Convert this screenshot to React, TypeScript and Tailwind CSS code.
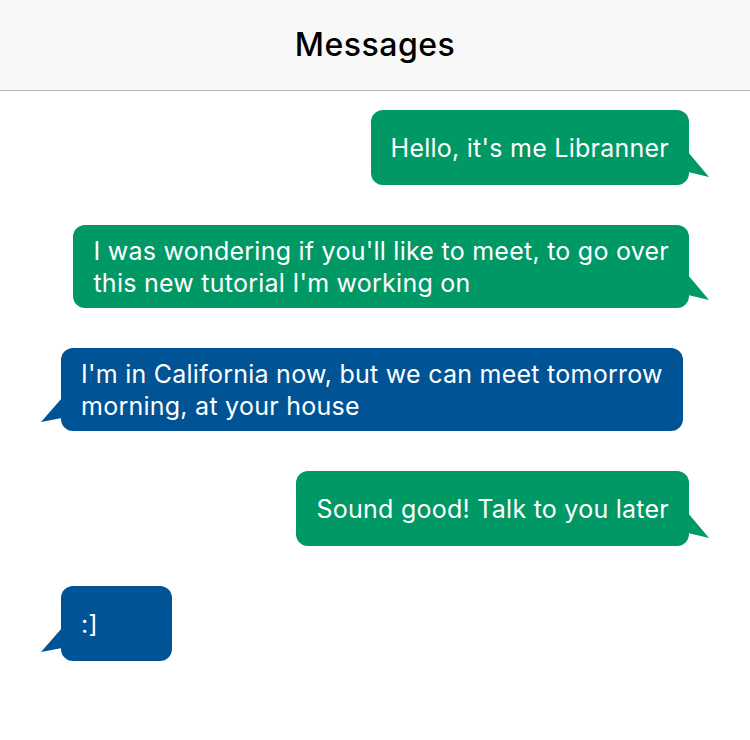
import React from "react";

type Msg = { lines: string[]; mine: boolean; minW?: boolean };

// Line breaks are fixed so each bubble hugs its longest line.
const messages: Msg[] = [
  { lines: ["Hello, it's me Libranner"], mine: true },
  {
    lines: [
      "I was wondering if you'll like to meet, to go over",
      "this new tutorial I'm working on",
    ],
    mine: true,
  },
  {
    lines: [
      "I'm in California now, but we can meet tomorrow",
      "morning, at your house",
    ],
    mine: false,
  },
  { lines: ["Sound good! Talk to you later"], mine: true },
  { lines: [":]"], mine: false, minW: true },
];

function Bubble({ msg }: { msg: Msg }) {
  return (
    <div className={msg.mine ? "flex justify-end" : "flex justify-start"}>
      <div
        className={
          "relative flex items-center min-h-[75px] rounded-[12px] px-5 py-[9.5px] text-[25px] leading-[32px] tracking-[0.25px] text-white whitespace-nowrap " +
          (msg.mine ? "bg-[#009865]" : "bg-[#005394]") +
          (msg.minW ? " min-w-[111px]" : "")
        }
      >
        <div className="flex flex-col">
          {msg.lines.map((l, i) => (
            <span key={i}>{l}</span>
          ))}
        </div>
        {msg.mine ? (
          <svg
            width="21"
            height="25"
            viewBox="0 0 21 25"
            className="absolute -right-[20px] bottom-[8px]"
          >
            <polygon points="0,0 21,25 0,20" fill="#009865" />
          </svg>
        ) : (
          <svg
            width="21"
            height="24"
            viewBox="0 0 21 24"
            className="absolute -left-[20px] bottom-[9px]"
          >
            <polygon points="21,0 0,24 21,20" fill="#005394" />
          </svg>
        )}
      </div>
    </div>
  );
}

export default function App() {
  return (
    <div className="w-[750px] h-[740px] bg-white font-['Inter',sans-serif]">
      <header className="h-[91px] bg-[#f8f8f8] border-b border-[#b4b4b4] flex items-center justify-center">
        <h1 className="text-[32px] font-medium tracking-[0.5px] text-black">
          Messages
        </h1>
      </header>
      <div className="flex flex-col gap-10 px-[61px] pt-[19px]">
        {messages.map((m, i) => (
          <Bubble key={i} msg={m} />
        ))}
      </div>
    </div>
  );
}
